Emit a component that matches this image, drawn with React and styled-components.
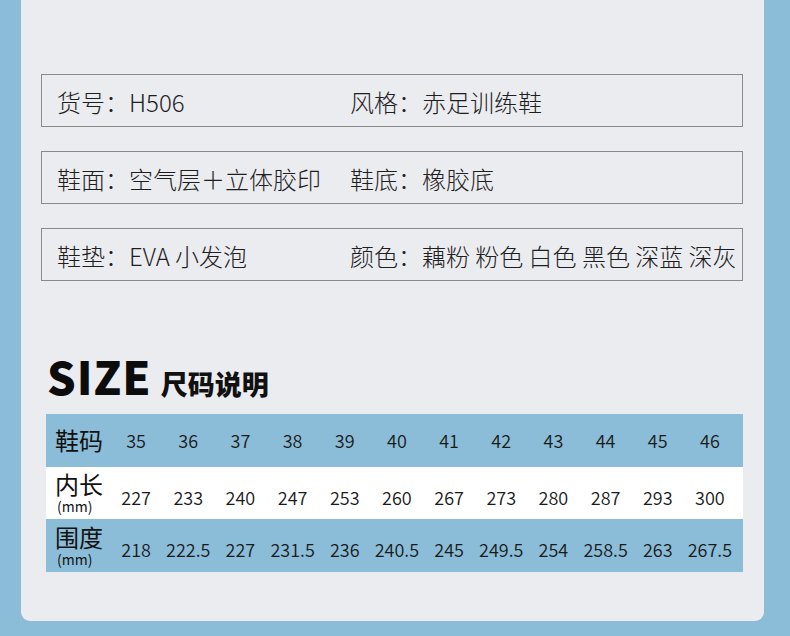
import styled, { createGlobalStyle } from 'styled-components';

const GlobalStyle = createGlobalStyle`
    * {
        box-sizing: border-box;
    }

    body {
        margin: 0;
        background: #8bbdd8;
        font-family: "Noto Sans CJK SC", "Noto Sans", sans-serif;
        color: #1b1b1b;
    }
`;

const specs = [
    [['货号', 'H506'], ['风格', '赤足训练鞋']],
    [['鞋面', '空气层＋立体胶印'], ['鞋底', '橡胶底']],
    [['鞋垫', 'EVA 小发泡'], ['颜色', '藕粉 粉色 白色 黑色 深蓝 深灰']],
];

const sizes = ['35', '36', '37', '38', '39', '40', '41', '42', '43', '44', '45', '46'];

const rows = [
    { label: '内长', unit: '(mm)', light: true, values: ['227', '233', '240', '247', '253', '260', '267', '273', '280', '287', '293', '300'] },
    { label: '围度', unit: '(mm)', light: false, values: ['218', '222.5', '227', '231.5', '236', '240.5', '245', '249.5', '254', '258.5', '263', '267.5'] },
];

function App() {
    return (
        <>
            <GlobalStyle />
            <Card>
                <SpecList>
                    {specs.map((pair, i) => (
                        <SpecBox key={i}>
                            {pair.map(([name, value]) => (
                                <SpecItem key={name}>{`${name}：${value}`}</SpecItem>
                            ))}
                        </SpecBox>
                    ))}
                </SpecList>

                <SizeTitle>
                    <h2>SIZE</h2>
                    <span>尺码说明</span>
                </SizeTitle>

                <SizeTable>
                    <TableRow>
                        <RowLabel>鞋码</RowLabel>
                        {sizes.map(s => <Cell key={s}>{s}</Cell>)}
                    </TableRow>
                    {rows.map(row => (
                        <TableRow key={row.label} light={row.light ? 1 : 0}>
                            <RowLabel>
                                <span>{row.label}</span>
                                <small>{row.unit}</small>
                            </RowLabel>
                            {row.values.map((v, i) => <Cell key={i} low={1}>{v}</Cell>)}
                        </TableRow>
                    ))}
                </SizeTable>
            </Card>
        </>
    );
}

export default App;

const Card = styled.div`
    width: 743px;
    height: 621px;
    margin-left: 21px;
    padding: 74px 21px 0 20px;
    background: #ebecf0;
    border-radius: 0 0 9px 9px;
`;

const SpecList = styled.div`
    display: flex;
    flex-direction: column;
    gap: 24px;
`;

const SpecBox = styled.div`
    display: grid;
    grid-template-columns: 293px 1fr;
    align-items: center;
    height: 53px;
    padding: 3px 0 0 15px;
    border: 1px solid #8a8a8a;
`;

const SpecItem = styled.div`
    font-size: 24px;
    font-weight: 300;
    line-height: 1;
    white-space: nowrap;
    color: #1e1e1e;
`;

const SizeTitle = styled.div`
    display: flex;
    align-items: baseline;
    gap: 9px;
    margin: 72px 0 0 6px;
    height: 61px;

    h2 {
        margin: 0;
        font-size: 45px;
        line-height: 1;
        font-weight: 900;
        letter-spacing: 1px;
        color: #0c0c0c;
    }

    span {
        font-size: 27px;
        font-weight: 900;
        color: #111;
    }
`;

const SizeTable = styled.div`
    width: 697px;
    margin-left: 5px;
`;

const TableRow = styled.div`
    display: grid;
    grid-template-columns: 64px repeat(12, 1fr);
    height: 52.5px;
    padding-right: 7px;
    background: ${({ light }) => light ? '#ffffff' : '#8bbdd8'};
`;

const RowLabel = styled.div`
    display: flex;
    flex-direction: column;
    justify-content: center;
    padding-left: 9px;
    font-size: 24px;
    line-height: 24px;
    color: #111;

    small {
        margin-top: 3px;
        padding-left: 2px;
        font-size: 14px;
        line-height: 14px;
    }
`;

const Cell = styled.div`
    display: flex;
    align-items: center;
    justify-content: center;
    padding-top: ${({ low }) => low ? '8px' : '0'};
    font-size: 18px;
    font-weight: 350;
    white-space: nowrap;
    color: #1a1a1a;
`;
